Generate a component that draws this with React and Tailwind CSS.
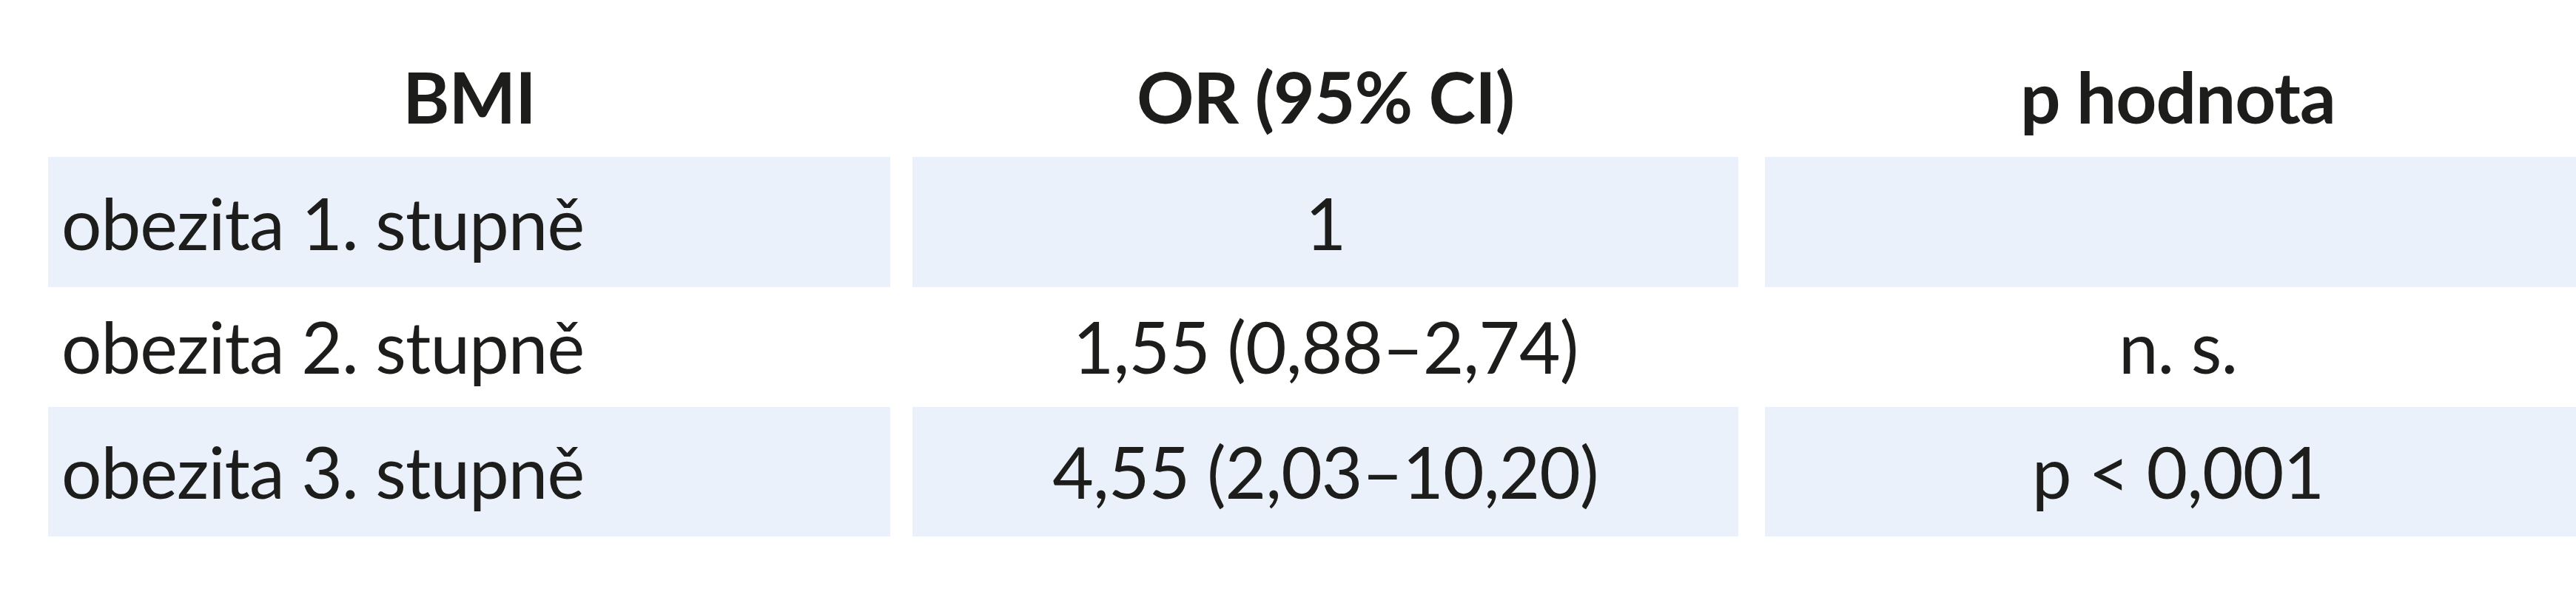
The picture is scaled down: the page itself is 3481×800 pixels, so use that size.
import React from "react";

const rows = [
  { bmi: "obezita 1. stupně", or: "1", p: "", shaded: true, h: "h-[176px]", pt: "pt-[41px]" },
  { bmi: "obezita 2. stupně", or: "1,55 (0,88–2,74)", p: "n. s.", shaded: false, h: "h-[162px]", pt: "pt-[32px]" },
  { bmi: "obezita 3. stupně", or: "4,55 (2,03–10,20)", p: "p < 0,001", shaded: true, h: "h-[175px]", pt: "pt-[39px]" },
];

const App = () => {
  return (
    <div
      className="w-[3481px] h-[800px] bg-white overflow-hidden text-[#1d1d1b]"
      style={{ fontFamily: "Lato, 'Open Sans', sans-serif" }}
    >
      <div className="pl-[65px]">
        {/* Header */}
        <div className="grid grid-cols-[1138px_1116px_1122px] gap-x-[30px] h-[212px] pt-[82px] text-[96px] leading-none font-bold tracking-[-0.01em]">
          <div className="text-center">BMI</div>
          <div className="text-center">OR (95% CI)</div>
          <div className="text-center ml-[6px]">p hodnota</div>
        </div>

        {/* Body rows */}
        {rows.map((row) => (
          <div
            key={row.bmi}
            className={`grid grid-cols-[1138px_1116px_1122px] gap-x-[30px] ${row.h} text-[96px] leading-none tracking-[-0.01em]`}
          >
            <div className={`${row.shaded ? "bg-[#eaf1fa]" : ""} ${row.pt} pl-[18px]`}>{row.bmi}</div>
            <div className={`${row.shaded ? "bg-[#eaf1fa]" : ""} ${row.pt} text-center`}>{row.or}</div>
            <div className={`${row.shaded ? "bg-[#eaf1fa]" : ""} ${row.pt} text-center ml-[6px]`}>{row.p}</div>
          </div>
        ))}
      </div>
    </div>
  );
};

export default App;
